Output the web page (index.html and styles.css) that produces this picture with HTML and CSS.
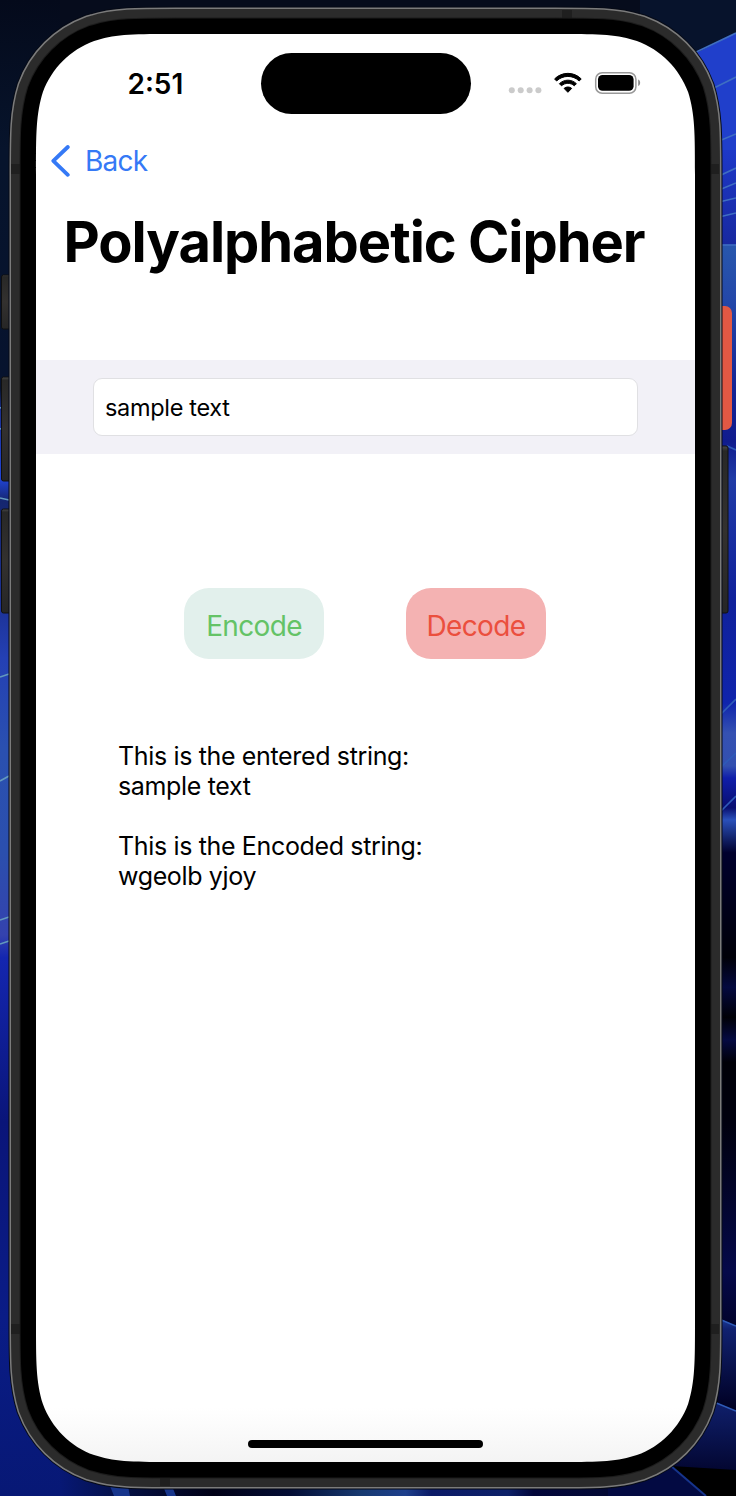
FILE: index.html
```html
<!DOCTYPE html>
<html lang="en">
<head>
<meta charset="utf-8">
<title>Polyalphabetic Cipher</title>
<link rel="stylesheet" href="styles.css">
</head>
<body>
<svg class="backdrop" viewBox="0 0 736 1496" aria-hidden="true">
  <defs>
    <linearGradient id="leftSky" x1="0" y1="0" x2="0" y2="1">
      <stop offset="0" stop-color="#040a1b"/><stop offset=".1" stop-color="#07142c"/>
      <stop offset=".26" stop-color="#07132e"/><stop offset=".275" stop-color="#1a2f91"/>
      <stop offset=".32" stop-color="#2044d5"/><stop offset=".335" stop-color="#15266f"/>
      <stop offset=".4" stop-color="#1b3092"/><stop offset=".44" stop-color="#2440b4"/>
      <stop offset=".5" stop-color="#2a50b0"/><stop offset=".57" stop-color="#2b4fae"/>
      <stop offset=".625" stop-color="#3442ae"/><stop offset=".64" stop-color="#1426b0"/>
      <stop offset=".75" stop-color="#0a1579"/><stop offset=".88" stop-color="#0a1c86"/>
      <stop offset="1" stop-color="#071875"/>
    </linearGradient>
    <linearGradient id="rightSky" x1="0" y1="0" x2="0" y2="1">
      <stop offset="0" stop-color="#050a18"/><stop offset=".03" stop-color="#08152f"/>
      <stop offset=".035" stop-color="#2040cc"/><stop offset=".1" stop-color="#1d38c8"/>
      <stop offset=".163" stop-color="#1829a0"/><stop offset=".164" stop-color="#2857ad"/>
      <stop offset=".2" stop-color="#2448a9"/><stop offset=".26" stop-color="#152494"/>
      <stop offset=".295" stop-color="#101c8e"/><stop offset=".32" stop-color="#203ba6"/>
      <stop offset=".4" stop-color="#10219b"/><stop offset=".47" stop-color="#0f24ac"/>
      <stop offset=".49" stop-color="#3551b2"/><stop offset=".512" stop-color="#3350b0"/>
      <stop offset=".52" stop-color="#101eaa"/><stop offset=".54" stop-color="#090f70"/>
      <stop offset=".548" stop-color="#2a50ba"/><stop offset=".57" stop-color="#00002d"/>
      <stop offset=".64" stop-color="#000008"/><stop offset=".66" stop-color="#04093f"/>
      <stop offset=".68" stop-color="#000006"/><stop offset=".695" stop-color="#050a42"/>
      <stop offset=".71" stop-color="#000007"/><stop offset=".75" stop-color="#00000e"/>
      <stop offset=".85" stop-color="#05094a"/><stop offset=".9" stop-color="#000020"/>
      <stop offset="1" stop-color="#000003"/>
    </linearGradient>
    <linearGradient id="floor" x1="0" y1="0" x2="1" y2="0">
      <stop offset="0" stop-color="#071875"/><stop offset=".1" stop-color="#041044"/>
      <stop offset=".24" stop-color="#000016"/><stop offset=".36" stop-color="#030d35"/>
      <stop offset=".47" stop-color="#173970"/><stop offset=".54" stop-color="#1d3f8c"/>
      <stop offset=".58" stop-color="#0b1a67"/><stop offset=".7" stop-color="#0d2068"/>
      <stop offset=".74" stop-color="#02063a"/><stop offset=".84" stop-color="#030936"/>
      <stop offset="1" stop-color="#000014"/>
    </linearGradient>
    <linearGradient id="petal" x1="0" y1="0" x2="0" y2="1">
      <stop offset="0" stop-color="#1c3d9c"/><stop offset=".12" stop-color="#102170"/><stop offset="1" stop-color="#000022"/>
    </linearGradient>
    <linearGradient id="key" x1="0" y1="0" x2="0" y2="1">
      <stop offset="0" stop-color="#4c4c4b"/><stop offset=".03" stop-color="#282827"/>
      <stop offset=".5" stop-color="#33312f"/><stop offset="1" stop-color="#262626"/>
    </linearGradient>
    <linearGradient id="glass" x1="0" y1="0" x2="0" y2="1">
      <stop offset=".962" stop-color="#fff"/><stop offset="1" stop-color="#f4f4f4"/>
    </linearGradient>
    <path id="screenShape" d="M176.6 34H554.4C594.9 34 615.1 34 633.4 40L636.9 40.9C660.7 49.6 679.4 68.3 688.1 92.1C695 113.9 695 134.1 695 174.6V1321.4C695 1361.9 695 1382.1 688.1 1403.9C679.4 1427.7 660.7 1446.4 636.9 1455.1L633.4 1456C615.1 1462 594.9 1462 554.4 1462H176.6C136.1 1462 115.9 1462 97.6 1456L94.1 1455.1C70.3 1446.4 51.6 1427.7 42.9 1403.9C36 1382.1 36 1361.9 36 1321.4V174.6C36 134.1 36 113.9 42.9 92.1C51.6 68.3 70.3 49.6 94.1 40.9L97.6 40C115.9 34 136.1 34 176.6 34Z"/>
  </defs>
  <rect width="368" height="1496" fill="url(#leftSky)"/>
  <rect x="368" width="368" height="1496" fill="url(#rightSky)"/>
  <rect x="60" width="660" height="120" fill="#060c1c"/>
  <path d="M640 0H736V33L690 56L640 90Z" fill="#07132c"/>
  <path d="M736 33L690 56V150H736Z" fill="#203fcb"/>
  <rect y="1400" x="60" width="640" height="96" fill="url(#floor)"/>
  <path d="M110 1486H128L130 1496H114ZM163 1486H172L176 1496H167Z" fill="#17358c"/>
  <path d="M718 1318L736 1326V1410H718Z" fill="url(#petal)"/>
  <path d="M660 1385L714 1402L736 1411V1472L690 1488H660Z" fill="url(#petal)"/>
  <path d="M671 1466L736 1470V1496H706Z" fill="#000"/>
  <path d="M608 1496V1480L671 1466L706 1496Z" fill="#030a42"/>
  <path d="M671 1466L706 1496" stroke="#16348c" stroke-width="2"/>
  <g fill="none" stroke="#3f6ec2" stroke-width="1.6">
    <path d="M690 55L736 33M714 88L736 77M719 141L736 134M719 176L736 168M719 190L736 183M719 202L736 198M719 217L736 213M719 245H736"/>
    <path d="M727 446L736 450M721 714L736 699M721 767L736 753M721 811L736 796M719 1319L736 1326M714 1402L736 1411" stroke="#2f5bb8"/>
    <path d="M0 408L3 407M0 429L3 428M0 498L9 500M0 677L9 674M0 781L9 776M0 920L9 917M0 944L9 941" stroke="#6299bd"/>
  </g>
  <rect x="712" y="306" width="20" height="124" rx="7" fill="#e25844"/>
  <g stroke="#101010" fill="url(#key)">
    <rect x="1.5" y="275" width="14" height="54" rx="2"/>
    <rect x="1.5" y="377" width="14" height="104" rx="2"/>
    <rect x="1.5" y="509" width="14" height="104" rx="2"/>
    <rect x="712" y="446" width="16" height="167" rx="2"/>
  </g>
  <use href="#screenShape" stroke="#070b16" stroke-width="55"/>
  <use href="#screenShape" stroke="#7b7b7b" stroke-width="53"/>
  <use href="#screenShape" stroke="#2b2b2b" stroke-width="50"/>
  <path d="M11 164H20V174H11ZM711 164H719V174H711ZM11 1324H20V1334H11ZM711 1324H719V1334H711ZM562 10H572V19H562ZM160 1477H170V1486H160Z" fill="#1f1f1f"/>
  <use href="#screenShape" stroke="#1c1c1c" stroke-width="33"/>
  <use href="#screenShape" stroke="#000" stroke-width="31"/>
  <use href="#screenShape" fill="url(#glass)"/>
</svg>

<main class="screen">
  <header class="status-bar">
    <span class="clock">2:51</span>
    <span class="island"></span>
    <svg class="status-icons" width="134" height="26" viewBox="0 0 134 26" aria-hidden="true">
      <g fill="#cbcbcb"><circle cx="3.8" cy="20.2" r="3"/><circle cx="12.7" cy="20.2" r="3"/><circle cx="21.6" cy="20.2" r="3"/><circle cx="30.4" cy="20.2" r="3"/></g>
      <path d="M46.6 8.9C53.8 1.5 66 1.5 73.2 8.9L71.2 11C64.9 4.9 54.9 4.9 48.6 11Z" stroke="#000" stroke-linejoin="round"/>
      <path d="M51.4 13.7C56.2 9 63.6 9 68.4 13.7L66.3 15.8C62.6 12.5 57.2 12.5 53.5 15.8Z" stroke="#000" stroke-linejoin="round"/>
      <path d="M56.1 18.4C58.3 16.5 61.5 16.5 63.7 18.4L59.9 22.3Z" stroke="#000" stroke-linejoin="round"/>
      <rect x="87.7" y="2.7" width="40.2" height="20.6" rx="6.5" fill="#fff" stroke="#999" stroke-width="1.5"/>
      <rect x="90" y="5" width="35.6" height="15.8" rx="4.5"/>
      <path d="M130.2 9.5C132.8 10.3 132.8 15.2 130.2 16Z" fill="#888"/>
    </svg>
  </header>

  <nav class="nav">
    <a class="back"><svg width="20" height="32" viewBox="0 0 20 32" aria-hidden="true"><path d="M17.8 2L3.3 15.8L17.8 29.8" fill="none" stroke="#3579f6" stroke-width="3.8" stroke-linecap="round" stroke-linejoin="round"/></svg><span>Back</span></a>
  </nav>
  <h1 class="title">Polyalphabetic Cipher</h1>

  <section class="entry"><input class="field" type="text" value="sample text" aria-label="Text"></section>

  <section class="actions">
    <button class="button encode">Encode</button>
    <button class="button decode">Decode</button>
  </section>

  <section class="result">
    <p>This is the entered string:<br>sample text</p>
    <p>This is the Encoded string:<br>wgeolb yjoy</p>
  </section>

  <div class="home-bar"></div>
</main>
</body>
</html>
```
FILE: styles.css
```css
* { box-sizing: border-box; }

body {
  margin: 0;
  width: 736px;
  height: 1496px;
  padding: 34px 41px 34px 36px;
  overflow: hidden;
  background: #060c1c;
  color: #000;
  font-family: Inter, "Liberation Sans", sans-serif;
}

.backdrop {
  position: absolute;
  left: 0;
  top: 0;
  width: 736px;
  height: 1496px;
  z-index: -1;
}

.screen {
  display: flex;
  flex-direction: column;
  width: 659px;
  height: 1428px;
}

.status-bar {
  display: flex;
  align-items: center;
  height: 61px;
  margin-top: 19px;
  padding-left: 91.5px;
}

.clock {
  width: 133px;
  font-size: 28px;
  font-weight: 600;
  letter-spacing: 0;
}

.island {
  width: 210px;
  height: 61px;
  border-radius: 31px;
  background: #000;
}

.status-icons { margin: -1px 0 0 37.5px; }

.nav {
  height: 40px;
  margin-top: 27px;
  padding-left: 14px;
}

.back {
  display: flex;
  align-items: center;
  gap: 15px;
  height: 40px;
  color: #3579f6;
  font-size: 28px;
  letter-spacing: -0.8px;
}

.title {
  height: 70px;
  margin: 26px 0 0;
  padding-left: 27.5px;
  font-size: 56px;
  line-height: 70px;
  font-weight: 700;
  letter-spacing: -1.04px;
  white-space: nowrap;
}

.entry {
  height: 94px;
  margin-top: 83px;
  padding: 18px 57px;
  background: #f2f1f7;
}

.field {
  display: block;
  width: 545px;
  height: 58px;
  padding: 0 11px;
  border: 1px solid #e0e0e3;
  border-radius: 9px;
  background: #fff;
  color: #000;
  font: 23.5px Inter, "Liberation Sans", sans-serif;
  letter-spacing: -0.32px;
}

.actions {
  display: flex;
  justify-content: center;
  gap: 82px;
  margin: 134px 1px 0 0;
}

.button {
  width: 140px;
  height: 71px;
  padding: 5px 0 0;
  border: 0;
  border-radius: 25px;
  font: 28px Inter, "Liberation Sans", sans-serif;
  letter-spacing: -0.65px;
}

.encode { background: #e2f0ec; color: #64c366; }
.decode { background: #f4b2b2; color: #eb4f3e; }

.result {
  margin-top: 83px;
  padding-left: 82px;
  font-size: 25px;
  line-height: 29.9px;
  letter-spacing: -0.35px;
}

.result p { margin: 0 0 30px; }

.home-bar {
  width: 235px;
  height: 8px;
  margin: auto auto 14px;
  border-radius: 4px;
  background: #000;
}
```
